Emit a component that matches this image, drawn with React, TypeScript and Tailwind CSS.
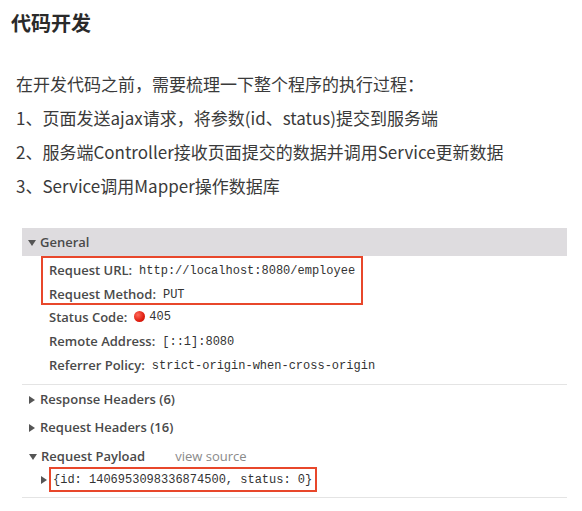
const cjk = { fontFamily: '"Noto Sans CJK SC", "Noto Sans", sans-serif' };
const ui = { fontFamily: '"Open Sans", "Noto Sans", sans-serif' };
const mono = { fontFamily: '"Liberation Mono", "DejaVu Sans Mono", monospace' };

function Down() {
  return <span className="inline-block w-0 h-0 border-l-[4px] border-r-[4px] border-t-[6px] border-l-transparent border-r-transparent border-t-[#555] mr-[4px]" />;
}

function Right({ gap = 'mr-[5px]' }: { gap?: string }) {
  return <span className={`inline-block w-0 h-0 border-t-[4px] border-b-[4px] border-l-[6px] border-t-transparent border-b-transparent border-l-[#555] ${gap}`} />;
}

function Row({ label, children }: { label: string; children: React.ReactNode }) {
  return (
    <div className="h-[24px] flex items-center text-[13px]">
      <span className="font-semibold text-[#4a4a4a] mr-[7px]" style={ui}>{label}</span>
      <span className="text-[12px] text-[#333]" style={mono}>{children}</span>
    </div>
  );
}

export default function App() {
  const lines = [
    '在开发代码之前，需要梳理一下整个程序的执行过程：',
    '1、页面发送ajax请求，将参数(id、status)提交到服务端',
    '2、服务端Controller接收页面提交的数据并调用Service更新数据',
    '3、Service调用Mapper操作数据库',
  ];

  return (
    <div className="w-[582px] h-[511px] bg-white overflow-hidden">
      <h1 className="pt-[10px] pl-[11px] text-[20px] leading-[26px] font-bold text-[#2a2a2a]" style={cjk}>
        代码开发
      </h1>

      <div className="mt-[31px] pl-[16px] text-[17px] leading-[34px] text-[#3a3a3a]" style={cjk}>
        {lines.map((l) => (
          <p key={l}>{l}</p>
        ))}
      </div>

      <div className="mt-[25px] ml-[22px] w-[545px]">
        <div className="h-[28px] bg-[#dedcdf] flex items-center pl-[6px] pt-[1px] text-[13px] font-semibold text-[#4a4a4a]" style={ui}>
          <Down />
          General
        </div>

        <div className="ml-[19px] w-[322px] h-[49px] border-2 border-[#e8472b] pl-[6px] pt-[1px]">
          <Row label="Request URL:">http://localhost:8080/employee</Row>
          <Row label="Request Method:">PUT</Row>
        </div>

        <div className="pl-[27px] mt-[1px]">
          <Row label="Status Code:">
            <span className="inline-flex items-center">
              <span className="inline-block w-[11px] h-[11px] rounded-full bg-[radial-gradient(circle_at_35%_35%,#ff6a5a,#e01e10_60%,#b80c00)] mr-[4px]" />
              405
            </span>
          </Row>
          <Row label="Remote Address:">[::1]:8080</Row>
          <Row label="Referrer Policy:">strict-origin-when-cross-origin</Row>
        </div>

        <div className="mt-[6px] h-px bg-[#e4e4e4]" />

        <div className="pl-[7px] text-[13px] font-semibold text-[#4a4a4a]" style={ui}>
          <div className="h-[28px] flex items-center mt-[1px]">
            <Right />
            Response Headers (6)
          </div>
          <div className="h-[28px] flex items-center">
            <Right />
            Request Headers (16)
          </div>
          <div className="h-[20px] mt-[5px] flex items-center">
            <Down />
            Request Payload
            <span className="ml-[30px] font-normal text-[#8a8a8a]">view source</span>
          </div>
        </div>

        <div className="flex items-center pl-[19px]">
          <Right gap="mr-[2px]" />
          <div className="h-[25px] w-[268px] border-2 border-[#e8472b] flex items-center pl-[2px] text-[12px] text-[#333]" style={mono}>
            {'{id: 1406953098336874500, status: 0}'}
          </div>
        </div>

        <div className="mt-[5px] h-px bg-[#e4e4e4]" />
      </div>
    </div>
  );
}
